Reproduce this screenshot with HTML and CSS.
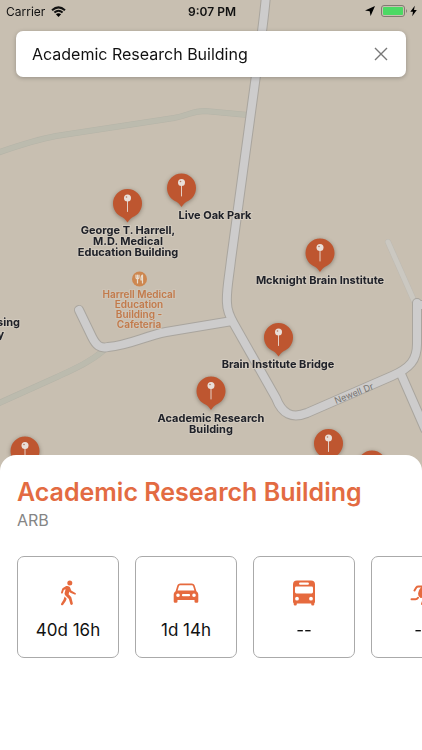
FILE: index.html
```html
<!DOCTYPE html>
<html lang="en">
<head>
<meta charset="utf-8">
<meta name="viewport" content="width=device-width, initial-scale=1">
<title>Campus Map</title>
<link rel="stylesheet" href="styles.css">
</head>
<body>
<svg class="map" viewBox="0 0 422 750" preserveAspectRatio="xMidYMin slice" role="img" aria-label="Campus map">
  <defs>
    <g id="pin">
      <path class="pin-body" d="M-14.5 0A14.5 14.5 0 1 1 14.5 0C14.5 6.500 10.500 11.500 5 13.800C3 14.800 1.500 17 0 19C-1.500 17-3 14.800-5 13.800C-10.500 11.500-14.500 6.500-14.500 0Z"/>
      <path class="pin-needle" d="M0-3V8"/>
      <circle class="pin-head" cx="0" cy="-5.500" r="3.500"/>
      <circle class="pin-glint" cx="-1" cy="-6.500" r=".8"/>
    </g>
    <path id="newell" d="M336 404L376 388"/>
    <g id="roads">
      <path d="M266-5C264 22 258 60 254 90L231 260C229 278 226 292 227 303C227 311 230 317 234 324L276 398C282 414 292 419 307 413L392 376C410 368 417 360 417 344V303"/>
      <path d="M79 310L92 337C96 345 100 349 108 347C130 345 145 336 166 332L232 321"/>
      <path d="M401 374L425 429"/>
      <path d="M417 305H426"/>
    </g>
  </defs>
  <g class="trail-edge">
    <path d="M-3 153C20 145 35 140 56 136L174 118C190 115 192 111 205 111L248 115M-3 404L57 377C74 369 90 362 103 351"/>
  </g>
  <g class="trail">
    <path d="M-3 153C20 145 35 140 56 136L174 118C190 115 192 111 205 111L248 115M-3 404L57 377C74 369 90 362 103 351"/>
  </g>
  <path class="lane-edge" d="M388 242L415 303"/>
  <path class="lane" d="M388 242L415 303"/>
  <use href="#roads" class="road-edge"/>
  <use href="#roads" class="road"/>

  <text class="street"><textPath href="#newell">Newell Dr</textPath></text>

  <g class="pins">
    <use href="#pin" x="127.500" y="203.500"/>
    <use href="#pin" x="181.500" y="188"/>
    <use href="#pin" x="320" y="253"/>
    <use href="#pin" x="278.500" y="337.500"/>
    <use href="#pin" x="211" y="391"/>
    <use href="#pin" x="25" y="451"/>
    <use href="#pin" x="328.500" y="443.500"/>
    <use href="#pin" x="372" y="465"/>
  </g>

  <g class="labels">
    <text x="128" y="234">George T. Harrell,</text>
    <text x="128" y="245">M.D. Medical</text>
    <text x="128" y="256">Education Building</text>
    <text x="215" y="219">Live Oak Park</text>
    <text x="320" y="284">Mcknight Brain Institute</text>
    <text x="278" y="368">Brain Institute Bridge</text>
    <text x="211" y="422">Academic Research</text>
    <text x="211" y="433">Building</text>
    <text class="label-end" x="20" y="326">Nursing</text>
    <text class="label-end" x="4" y="338">Library</text>
  </g>

  <circle class="food" cx="139.500" cy="279" r="7.500"/>
  <path class="food-icon" d="M136 275V277.500Q136 279 137.500 279Q139 279 139 277.500V275M137.500 275V283M142.500 283V275Q140.800 276 141 280H142.500"/>
  <g class="labels food-labels">
    <text x="139" y="298">Harrell Medical</text>
    <text x="139" y="308">Education</text>
    <text x="139" y="318">Building -</text>
    <text x="139" y="328">Cafeteria</text>
  </g>
</svg>

<div class="screen">
  <header class="status">
    <div class="carrier">
      <span>Carrier</span>
      <svg width="15" height="11" viewBox="0 0 15 11" aria-hidden="true">
        <path class="wifi" d="M1 4.200Q7.500-1.400 14 4.200M3.400 6.600Q7.500 3 11.600 6.600"/>
        <path d="M7.500 11L4.900 8.300Q7.500 6.100 10.100 8.300Z"/>
      </svg>
    </div>
    <time>9:07 PM</time>
    <div class="power">
      <svg width="10" height="10" viewBox="0 0 10 10" aria-hidden="true"><path d="M10 0L5.600 10L4.700 5.300L0 4.400Z"/></svg>
      <svg width="37" height="12" viewBox="0 0 37 12" aria-hidden="true">
        <rect class="battery" x=".5" y=".5" width="23" height="11" rx="2.500"/>
        <rect class="charge" x="2" y="2" width="20" height="8" rx="1"/>
        <path class="cap" d="M25 4Q27 6 25 8Z"/>
        <path d="M33.800.8L29.300 6.700H32L31.200 11.200L35.800 5H33Z"/>
      </svg>
    </div>
  </header>

  <form class="search">
    <input type="text" value="Academic Research Building" aria-label="Search for a place">
    <button type="reset" aria-label="Clear search">
      <svg width="14" height="14" viewBox="0 0 14 14" aria-hidden="true"><path d="M1 1L13 13M13 1L1 13"/></svg>
    </button>
  </form>

  <main class="sheet">
    <h1>Academic Research Building</h1>
    <p class="code">ARB</p>
    <div class="modes">
      <button type="button" class="mode" aria-label="Walk, 40d 16h">
        <svg viewBox="0 0 26 26" aria-hidden="true">
          <circle cx="14.800" cy="2.900" r="2.500"/>
          <path d="M11.200 6.100C12.800 5.500 14.700 6.300 15.200 7.800L16.200 10.600L20.400 12.900C21.600 13.600 20.800 15.100 19.600 14.600L15.400 12.700C14.900 12.500 14.600 12.100 14.400 11.600L13.600 14.300L15.900 16.800C16.200 17.200 16.400 17.600 16.500 18.100L17.800 23.200C18.200 25 15.900 25.700 15.300 24L13.900 18.900L10.400 15.500C9.600 14.700 9.400 13.700 9.700 12.700L10.600 9.200L8.800 10L7.800 12.900C7.400 14.100 5.700 13.700 6.100 12.300L7.100 9C7.200 8.600 7.500 8.200 7.900 8ZM9.600 16.600L11.700 18.700L10.900 20.800C10.800 21 10.700 21.200 10.500 21.400L8.200 24.700C7.200 26.100 5.300 24.800 6.200 23.400L8.500 19.800Z"/>
        </svg>
        <span>40d 16h</span>
      </button>
      <button type="button" class="mode" aria-label="Drive, 1d 14h">
        <svg viewBox="0 0 26 26" aria-hidden="true">
          <path fill-rule="evenodd" d="M7.500 3.500H18.500C20.500 3.500 21.400 4.500 21.900 6.200L23.400 11.200C24.700 12 25.300 13.200 25.300 14.700V21.500Q25.300 22.800 24 22.800H22.800Q21.500 22.800 21.500 21.500V20H4.500V21.500Q4.500 22.800 3.200 22.800H2Q.7 22.800.7 21.500V14.700C.7 13.200 1.300 12 2.600 11.200L4.100 6.200C4.600 4.500 5.500 3.500 7.500 3.500ZM7.600 5.200C6.500 5.200 6.100 5.700 5.800 6.600L4.600 10.500H21.400L20.200 6.600C19.900 5.700 19.500 5.200 18.400 5.200ZM5 13.400A1.800 1.800 0 1 0 5 17A1.800 1.800 0 1 0 5 13.400ZM21 13.400A1.800 1.800 0 1 0 21 17A1.800 1.800 0 1 0 21 13.400ZM10 14.100A1.100 1.100 0 0 0 10 16.300H16A1.100 1.100 0 0 0 16 14.100Z"/>
        </svg>
        <span>1d 14h</span>
      </button>
      <button type="button" class="mode" aria-label="Bus, no time available">
        <svg viewBox="0 0 26 26" aria-hidden="true">
          <path fill-rule="evenodd" d="M6 .5H20Q24 .5 24 4.500V22.300L23.300 23.200V24.300Q23.300 25.600 22 25.600H21.500Q20.200 25.600 20.200 24.300V23.400H5.800V24.300Q5.800 25.600 4.500 25.600H4Q2.700 25.600 2.700 24.300V23.200L2 22.300V4.500Q2 .5 6 .5ZM9.200 2.500A1 1 0 0 0 9.200 4.800H16.800A1 1 0 0 0 16.800 2.500ZM5.400 6.500Q4 6.500 4 7.900V12.100Q4 13.500 5.400 13.500H20.600Q22 13.500 22 12.100V7.900Q22 6.500 20.600 6.500ZM6 16.800A1.900 1.900 0 1 0 6 20.600A1.900 1.900 0 1 0 6 16.800ZM20 16.800A1.900 1.900 0 1 0 20 20.600A1.900 1.900 0 1 0 20 16.800Z"/>
        </svg>
        <span>--</span>
      </button>
      <button type="button" class="mode" aria-label="Run, no time available">
        <svg viewBox="0 0 26 26" aria-hidden="true">
          <circle cx="19" cy="3.500" r="2.500"/>
          <path class="runner" d="M5.500 10.500L7.300 7.500Q8 6.500 9.500 6.500H14M2.500 19.300H6.500Q8 19.300 9 17.800M17 9L19 13H23M12 15L15 18L13 24"/>
          <path d="M12.500 6.500Q17 6 17.500 9L14.500 16Q13 19 11 17.500Q8.500 15.500 9.300 12.500Q10 9.500 12.500 6.500Z"/>
        </svg>
        <span>--</span>
      </button>
    </div>
  </main>
</div>
</body>
</html>
```
FILE: styles.css
```css
* {
  box-sizing: border-box;
}

body {
  margin: 0;
  background: #c8bfb1;
  color: #111;
  font-family: Inter, "Liberation Sans", sans-serif;
}

button,
input {
  font: inherit;
  color: inherit;
}

.map {
  position: absolute;
  inset: 0;
  width: 100%;
  height: 100%;
}

.map path {
  stroke-linecap: round;
  stroke-linejoin: round;
}

.trail,
.trail-edge,
.lane,
.lane-edge,
.road,
.road-edge {
  fill: none;
}

.trail-edge { stroke: #b5b4a8; stroke-width: 6; }
.trail { stroke: #bcbbae; stroke-width: 5; }
.lane-edge { stroke: #bebab2; stroke-width: 6; }
.lane { stroke: #cbc8c1; stroke-width: 5; }
.road-edge { stroke: #a9a59e; stroke-width: 10; }
.road { stroke: #cdcccc; stroke-width: 8; }

.street {
  fill: #77736e;
  font-size: 9px;
}

.pins {
  filter: drop-shadow(0 1px 2px rgb(60 45 30 / 45%));
}

.pin-body { fill: #be5630; }
.pin-needle { stroke: #e4cfc5; stroke-width: 1; }
.pin-head { fill: #e9dfd9; }
.pin-glint { fill: #b5785f; }

.labels {
  fill: #202229;
  stroke: #d2cabe;
  stroke-width: 2px;
  paint-order: stroke;
  font-size: 11px;
  font-weight: 700;
  text-anchor: middle;
}

.label-end {
  text-anchor: end;
}

.food-labels {
  fill: #c27a4b;
  stroke: #cec4b6;
  font-size: 10px;
  font-weight: 600;
}

.food { fill: #cd8750; }

.food-icon {
  fill: none;
  stroke: #e8ddd0;
  stroke-width: 1.2px;
}

.screen {
  position: relative;
  display: flex;
  flex-direction: column;
  min-height: 100vh;
}

.status {
  display: grid;
  grid-template-columns: 1fr auto 1fr;
  align-items: center;
  height: 22px;
  padding: 0 4px 0 6px;
  font-size: 12px;
}

.status time {
  font-weight: 600;
}

.carrier,
.power {
  display: flex;
  align-items: center;
  gap: 6px;
}

.power {
  justify-content: flex-end;
}

.wifi {
  fill: none;
  stroke: #111;
  stroke-width: 2px;
}

.battery {
  fill: none;
  stroke: #817b72;
}

.charge { fill: #4cd964; }
.cap { fill: #817b72; }

.search {
  display: flex;
  align-items: center;
  height: 46px;
  margin: 9px 16px 0;
  padding: 0 11px 0 16px;
  border-radius: 7px;
  background: #fff;
  box-shadow: 0 1px 4px rgb(0 0 0 / 25%);
}

.search input {
  flex: 1;
  min-width: 0;
  padding: 0;
  border: 0;
  outline: 0;
  background: none;
  font-size: 16px;
}

.search button {
  display: grid;
  place-items: center;
  width: 28px;
  height: 28px;
  padding: 0;
  border: 0;
  background: none;
}

.search svg {
  fill: none;
  stroke: #777;
  stroke-width: 1.4px;
}

.sheet {
  margin-top: auto;
  padding: 19px 0 92px 17px;
  border-radius: 16px 16px 0 0;
  background: #fff;
}

h1 {
  margin: 0;
  color: #e36b42;
  font-size: 25px;
  font-weight: 600;
  line-height: 36px;
}

.code {
  margin: 0;
  color: #858585;
  font-size: 16px;
  line-height: 20px;
}

.modes {
  display: flex;
  gap: 16px;
  margin-top: 26px;
  overflow: hidden;
}

.mode {
  display: flex;
  flex: none;
  flex-direction: column;
  align-items: center;
  gap: 14px;
  width: 102px;
  height: 102px;
  padding: 23px 0 0;
  border: 1px solid #aaa;
  border-radius: 7px;
  background: #fff;
  font-size: 17px;
  line-height: 20px;
}

.mode svg {
  width: 26px;
  height: 26px;
  fill: #e66a3e;
}

.mode .runner {
  fill: none;
  stroke: #e66a3e;
  stroke-width: 2px;
  stroke-linecap: round;
  stroke-linejoin: round;
}
```
